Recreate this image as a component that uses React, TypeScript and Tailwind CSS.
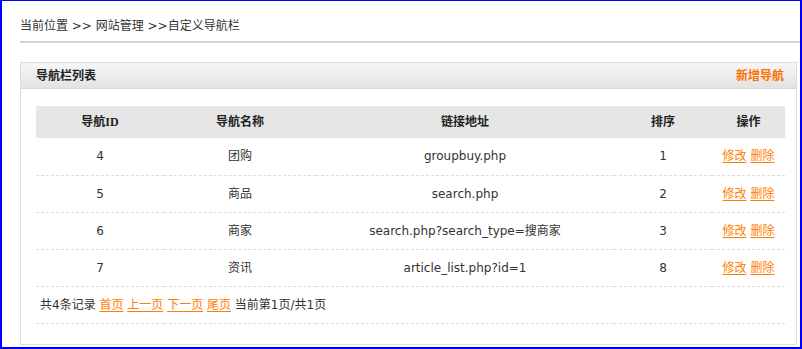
import React from "react";

interface NavRow {
  id: number;
  name: string;
  url: string;
  sort: number;
}

const rows: NavRow[] = [
  { id: 4, name: "团购", url: "groupbuy.php", sort: 1 },
  { id: 5, name: "商品", url: "search.php", sort: 2 },
  { id: 6, name: "商家", url: "search.php?search_type=搜商家", sort: 3 },
  { id: 7, name: "资讯", url: "article_list.php?id=1", sort: 8 },
];

const font = "font-['DejaVu_Sans','Noto_Sans_CJK_SC',sans-serif]";
const headFont = "font-['Liberation_Serif','Noto_Sans_CJK_SC',serif]";

function Link({ children }: { children: React.ReactNode }) {
  return (
    <a href="#" className="text-[#ff7e00] underline underline-offset-2">
      {children}
    </a>
  );
}

export default function App() {
  return (
    <div
      className={`w-[802px] h-[349px] bg-white border-[#0000ff] border-t border-l-2 border-r-2 border-b-2 text-[12px] text-[#333] ${font}`}
    >
      {/* breadcrumb */}
      <div className="pl-[18px] pt-[17px] h-[40px] leading-[17px]">
        当前位置 &gt;&gt; 网站管理 &gt;&gt;自定义导航栏
      </div>
      <div className="ml-[18px] h-[2px] bg-[#d4d4d4]" />

      {/* panel */}
      <div className="ml-[18px] mr-[3px] mt-[19px] h-[283px] border border-[#dcdcdc]">
        <div className="h-[26px] flex items-center justify-between pl-[15px] pr-[12px] bg-gradient-to-b from-[#f7f7f7] to-[#e2e2e2] border-b border-[#d8d8d8]">
          <span className={`font-bold text-[#222] ${headFont}`}>导航栏列表</span>
          <span className="font-bold text-[#ff7000]">新增导航</span>
        </div>

        <div className="px-[15px] pt-[17px]">
          <table className="w-[749px] table-fixed border-collapse text-center">
            <colgroup>
              <col className="w-[128px]" />
              <col className="w-[152px]" />
              <col className="w-[298px]" />
              <col className="w-[98px]" />
              <col className="w-[73px]" />
            </colgroup>
            <thead>
              <tr className={`h-[32px] bg-[#e6e6e6] font-bold text-[#222] ${headFont}`}>
                <th>导航ID</th>
                <th>导航名称</th>
                <th>链接地址</th>
                <th>排序</th>
                <th>操作</th>
              </tr>
            </thead>
            <tbody>
              {rows.map((r) => (
                <tr key={r.id} className="h-[37px] border-b border-dashed border-[#dedede]">
                  <td>{r.id}</td>
                  <td>{r.name}</td>
                  <td>{r.url}</td>
                  <td>{r.sort}</td>
                  <td>
                    <Link>修改</Link> <Link>删除</Link>
                  </td>
                </tr>
              ))}
              <tr className="h-[37px] border-b border-dashed border-[#dedede]">
                <td colSpan={5} className="text-left pl-[4px]">
                  共4条记录 <Link>首页</Link> <Link>上一页</Link> <Link>下一页</Link>{" "}
                  <Link>尾页</Link> 当前第1页/共1页
                </td>
              </tr>
            </tbody>
          </table>
        </div>
      </div>
    </div>
  );
}
